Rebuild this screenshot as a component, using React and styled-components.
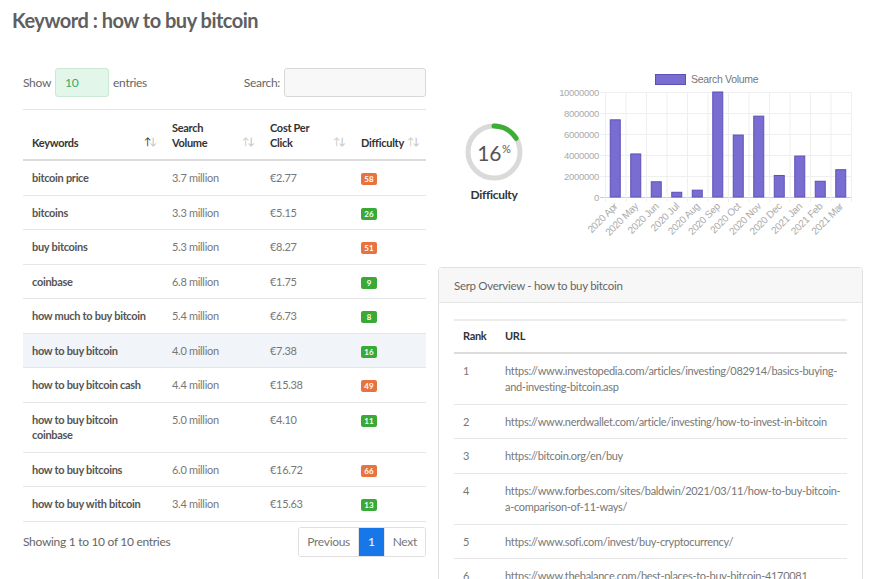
import styled, { createGlobalStyle } from 'styled-components'

const GlobalStyle = createGlobalStyle`
  body {
    margin: 0;
    background: #fff;
    font-family: Lato, "Open Sans", Arial, sans-serif;
    letter-spacing: -0.3px;
    color: #555;
  }
`

const Page = styled.div`
  padding: 8px 12px;
`

const Title = styled.h2`
  margin: 0;
  font-size: 20px;
  line-height: 24px;
  font-weight: 700;
  letter-spacing: -0.5px;
  color: #5f5f5f;
`

const Main = styled.div`
  display: flex;
  gap: 12px;
  margin-top: 36px;
`

const LeftCol = styled.div`
  width: 403px;
  margin-left: 11px;
`

const Controls = styled.div`
  display: flex;
  justify-content: space-between;
  align-items: center;
  height: 29px;
  margin-bottom: 12px;
  font-size: 12px;
  color: #666;
`

const ControlGroup = styled.label`
  display: flex;
  align-items: center;
  gap: 4px;
`

const LengthBox = styled.div`
  width: 54px;
  height: 29px;
  box-sizing: border-box;
  padding: 0 9px;
  display: flex;
  align-items: center;
  background: #e2f6e9;
  border: 1px solid #cbe8d5;
  border-radius: 3px;
  color: #3aa86a;
  font-size: 12px;
`

const SearchBox = styled.input`
  width: 142px;
  height: 29px;
  box-sizing: border-box;
  border: 1px solid #d8d8d8;
  border-radius: 3px;
  background: #f8f8f8;
`

const Table = styled.table`
  width: 100%;
  table-layout: fixed;
  border-collapse: collapse;
  border-top: 1px solid #e4e4e4;
  font-size: 11px;
  line-height: 15.5px;
`

const Th = styled.th`
  box-sizing: border-box;
  text-align: left;
  vertical-align: bottom;
  padding: 10px 8px 9px 9px;
  line-height: 15px;
  font-weight: 700;
  color: #333;
  border-bottom: 2px solid #dcdcdc;
  width: ${p => p.$w}px;
`

const ThInner = styled.div`
  display: flex;
  justify-content: space-between;
  align-items: flex-end;
`

const Sort = styled.span`
  font-size: 10px;
  color: #c8c8c8;
  letter-spacing: -2px;
  padding-bottom: 1px;

  b {
    font-weight: 400;
    color: ${p => (p.$active ? '#333' : '#c8c8c8')};
  }
`

const Tr = styled.tr`
  background: ${p => (p.$hl ? '#f1f4f8' : 'transparent')};
  border-bottom: 1px solid #e6e6e6;
`

const Td = styled.td`
  padding: 9px 9px;
  vertical-align: top;
  color: ${p => (p.$strong ? '#555' : '#777')};
  font-weight: ${p => (p.$strong ? 700 : 400)};
`

const Badge = styled.span`
  display: inline-block;
  min-width: 16px;
  height: 12px;
  line-height: 12px;
  box-sizing: border-box;
  padding: 0 3px;
  border-radius: 2px;
  background: ${p => (p.$hard ? '#e8733f' : '#3aa935')};
  color: #fff;
  font-size: 8px;
  font-weight: 700;
  letter-spacing: 0;
  text-align: center;
  vertical-align: middle;
`

const Footer = styled.div`
  display: flex;
  justify-content: space-between;
  align-items: center;
  margin-top: 5px;
  font-size: 12px;
  color: #666;
`

const Pager = styled.div`
  display: flex;
  height: 28px;
  border: 1px solid #e0e0e0;
  border-radius: 3px;
  overflow: hidden;
`

const PageBtn = styled.span`
  display: flex;
  align-items: center;
  padding: 0 ${p => (p.$active ? 9 : 8)}px;
  font-size: 12px;
  color: ${p => (p.$active ? '#fff' : '#777')};
  background: ${p => (p.$active ? '#1877e8' : '#fff')};
  border-left: ${p => (p.$first ? 'none' : '1px solid #e6e6e6')};
`

const RightCol = styled.div`
  width: 425px;
  padding-top: 2px;
`

const TopRow = styled.div`
  display: flex;
  height: 190px;
`

const Gauge = styled.div`
  width: 112px;
  display: flex;
  flex-direction: column;
  align-items: center;
  padding-top: 52px;
`

const Ring = styled.div`
  position: relative;
  width: 60px;
  height: 60px;
`

const RingLabel = styled.div`
  position: absolute;
  inset: 0;
  display: flex;
  align-items: center;
  justify-content: center;
  font-size: 21px;
  color: #555;

  sup {
    font-size: 11px;
    margin-left: 1px;
    margin-top: -8px;
  }
`

const GaugeCaption = styled.div`
  margin-top: 5px;
  font-size: 12px;
  font-weight: 700;
  color: #333;
`

const Card = styled.div`
  margin-top: 7px;
  border: 1px solid #e0e0e0;
  border-radius: 4px;
  overflow: hidden;
`

const CardHead = styled.div`
  height: 34px;
  display: flex;
  align-items: center;
  padding: 0 15px;
  background: #f7f7f7;
  border-bottom: 1px solid #e6e6e6;
  font-size: 11.5px;
  color: #666;
`

const CardBody = styled.div`
  padding: 16px 15px;
`

const SerpTable = styled.table`
  width: 100%;
  table-layout: fixed;
  border-collapse: collapse;
  border-top: 2px solid #ececec;
  font-size: 11px;
  line-height: 16.5px;
`

const SerpTh = styled.th`
  box-sizing: border-box;
  text-align: left;
  padding: 7px 9px 7px;
  font-weight: 700;
  color: #333;
  border-bottom: 2px solid #dcdcdc;
  width: ${p => (p.$w ? `${p.$w}px` : 'auto')};
`

const SerpTd = styled.td`
  padding: 9px ${p => (p.$url ? 4 : 9)}px 8px 9px;
  vertical-align: top;
  color: #777;
  border-bottom: 1px solid #e6e6e6;
`

const keywords = [
  ['bitcoin price', '3.7 million', '€2.77', 58],
  ['bitcoins', '3.3 million', '€5.15', 26],
  ['buy bitcoins', '5.3 million', '€8.27', 51],
  ['coinbase', '6.8 million', '€1.75', 9],
  ['how much to buy bitcoin', '5.4 million', '€6.73', 8],
  ['how to buy bitcoin', '4.0 million', '€7.38', 16],
  ['how to buy bitcoin cash', '4.4 million', '€15.38', 49],
  ['how to buy bitcoin coinbase', '5.0 million', '€4.10', 11],
  ['how to buy bitcoins', '6.0 million', '€16.72', 66],
  ['how to buy with bitcoin', '3.4 million', '€15.63', 13],
]

const serp = [
  'https://www.investopedia.com/articles/investing/082914/basics-buying-and-investing-bitcoin.asp',
  'https://www.nerdwallet.com/article/investing/how-to-invest-in-bitcoin',
  'https://bitcoin.org/en/buy',
  'https://www.forbes.com/sites/baldwin/2021/03/11/how-to-buy-bitcoin-a-comparison-of-11-ways/',
  'https://www.sofi.com/invest/buy-cryptocurrency/',
  'https://www.thebalance.com/best-places-to-buy-bitcoin-4170081',
]

const volume = [
  ['2020 Apr', 7.35], ['2020 May', 4.1], ['2020 Jun', 1.45], ['2020 Jul', 0.45],
  ['2020 Aug', 0.65], ['2020 Sep', 10], ['2020 Oct', 5.9], ['2020 Nov', 7.7],
  ['2020 Dec', 2.05], ['2021 Jan', 3.9], ['2021 Feb', 1.5], ['2021 Mar', 2.6],
]

const DifficultyRing = ({ value }) => {
  const r = 26
  const c = 2 * Math.PI * r
  return (
    <Ring>
      <svg width="60" height="60" viewBox="0 0 60 60">
        <circle cx="30" cy="30" r={r} fill="none" stroke="#dadada" strokeWidth="5" />
        <circle
          cx="30" cy="30" r={r} fill="none" stroke="#3cae33" strokeWidth="5"
          strokeLinecap="round"
          strokeDasharray={`${(c * value) / 100} ${c}`}
          transform="rotate(-90 30 30)"
        />
      </svg>
      <RingLabel>{value}<sup>%</sup></RingLabel>
    </Ring>
  )
}

const VolumeChart = () => {
  const x0 = 55
  const x1 = 301
  const y0 = 22
  const y1 = 127
  const step = (x1 - x0) / volume.length
  const ticks = [0, 2, 4, 6, 8, 10]
  const font = '"Liberation Sans", Arial, sans-serif'
  return (
    <svg width="310" height="170" viewBox="0 0 310 170">
      <rect x="105.5" y="4.5" width="30" height="10" fill="#7a6dd1" stroke="#5c50b8" />
      <text x="141" y="13" fontSize="10.5" fill="#777" fontFamily={font}>Search Volume</text>
      {ticks.map(t => {
        const y = y1 - (t / 10) * (y1 - y0)
        return (
          <g key={t}>
            <line x1={x0 - 5} x2={x1} y1={y + 0.5} y2={y + 0.5} stroke={t === 0 ? '#cfcfcf' : '#efefef'} />
            <text x={x0 - 6} y={y + 3.5} fontSize="9.5" fill="#aaa" textAnchor="end" fontFamily={font}>
              {t === 0 ? '0' : `${t * 1000000}`}
            </text>
          </g>
        )
      })}
      {volume.map(([label, v], i) => {
        const gx = x0 + i * step
        const cx = gx + step / 2
        const h = (v / 10) * (y1 - y0)
        return (
          <g key={label}>
            <line x1={gx + 0.5} x2={gx + 0.5} y1={y0} y2={y1 + 5} stroke="#efefef" />
            <rect x={cx - 5} y={y1 - h} width="10" height={h} fill="#7a6dd1" stroke="#5c50b8" strokeWidth="1" />
            <text
              x={cx + 3} y={y1 + 10} fontSize="10" fill="#aaa" textAnchor="end" fontFamily={font}
              transform={`rotate(-45 ${cx + 3} ${y1 + 10})`}
            >
              {label}
            </text>
          </g>
        )
      })}
      <line x1={x1 + 0.5} x2={x1 + 0.5} y1={y0} y2={y1 + 5} stroke="#efefef" />
    </svg>
  )
}

const SortIcon = ({ active }) => (
  <Sort $active={active}><b>↑</b>↓</Sort>
)

export default function App() {
  return (
    <Page>
      <GlobalStyle />
      <Title>Keyword : how to buy bitcoin</Title>
      <Main>
        <LeftCol>
          <Controls>
            <ControlGroup>Show <LengthBox>10</LengthBox> entries</ControlGroup>
            <ControlGroup>Search: <SearchBox /></ControlGroup>
          </Controls>
          <Table>
            <thead>
              <tr>
                <Th $w={140}><ThInner>Keywords <SortIcon active /></ThInner></Th>
                <Th $w={98}><ThInner><span>Search<br />Volume</span> <SortIcon /></ThInner></Th>
                <Th $w={91}><ThInner><span>Cost Per<br />Click</span> <SortIcon /></ThInner></Th>
                <Th $w={74}><ThInner>Difficulty <SortIcon /></ThInner></Th>
              </tr>
            </thead>
            <tbody>
              {keywords.map(([kw, vol, cpc, diff]) => (
                <Tr key={kw} $hl={kw === 'how to buy bitcoin'}>
                  <Td $strong>{kw}</Td>
                  <Td>{vol}</Td>
                  <Td>{cpc}</Td>
                  <Td><Badge $hard={diff > 40}>{diff}</Badge></Td>
                </Tr>
              ))}
            </tbody>
          </Table>
          <Footer>
            <span>Showing 1 to 10 of 10 entries</span>
            <Pager>
              <PageBtn $first>Previous</PageBtn>
              <PageBtn $active>1</PageBtn>
              <PageBtn>Next</PageBtn>
            </Pager>
          </Footer>
        </LeftCol>
        <RightCol>
          <TopRow>
            <Gauge>
              <DifficultyRing value={16} />
              <GaugeCaption>Difficulty</GaugeCaption>
            </Gauge>
            <VolumeChart />
          </TopRow>
          <Card>
            <CardHead>Serp Overview - how to buy bitcoin</CardHead>
            <CardBody>
              <SerpTable>
                <thead>
                  <tr>
                    <SerpTh $w={42}>Rank</SerpTh>
                    <SerpTh>URL</SerpTh>
                  </tr>
                </thead>
                <tbody>
                  {serp.map((url, i) => (
                    <tr key={url}>
                      <SerpTd>{i + 1}</SerpTd>
                      <SerpTd $url>{url}</SerpTd>
                    </tr>
                  ))}
                </tbody>
              </SerpTable>
            </CardBody>
          </Card>
        </RightCol>
      </Main>
    </Page>
  )
}
